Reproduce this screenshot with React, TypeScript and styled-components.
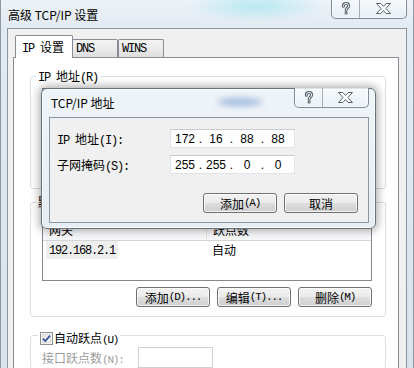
import React from "react";
import styled, { createGlobalStyle } from "styled-components";

const GlobalStyle = createGlobalStyle`
  html, body { margin: 0; padding: 0; }
  body {
    width: 414px; height: 368px; overflow: hidden;
    background: #dde6ee;
    font-family: "Noto Sans CJK SC", sans-serif;
  }
  *, *::before, *::after { box-sizing: border-box; }
`;

const Window = styled.div`
  position: relative;
  width: 414px;
  height: 368px;
  overflow: hidden;
  border-left: 1px solid #8d98a3;
  border-right: 1px solid #8d98a3;
  background:
    radial-gradient(ellipse 70px 16px at 255px 6px, rgba(150, 228, 242, 0.6), rgba(150, 228, 242, 0) 100%),
    linear-gradient(180deg, #edf2f7 0px, #e2eaf2 28px, #d9e3ec 368px);
  font-family: "Noto Sans CJK SC", sans-serif;
  font-size: 12px;
  color: #000;
`;

const TitleBar = styled.div`
  position: relative;
  display: flex;
  align-items: flex-start;
  height: 28px;
  padding: 0 6px 0 7px;
`;

const WindowTitle = styled.div`
  font-size: 12px;
  line-height: 30px;
  white-space: nowrap;
`;

const CaptionGroup = styled.div<{ $top: number; $w: number }>`
  display: flex;
  margin-left: auto;
  margin-top: ${(p) => p.$top}px;
  width: ${(p) => p.$w}px;
  height: 20px;
  border: 1px solid #7f8b98;
  border-top: none;
  border-radius: 0 0 5px 5px;
  background: linear-gradient(180deg, rgba(255, 255, 255, 0.55), rgba(232, 240, 247, 0.6));
  box-shadow: inset 0 0 0 1px rgba(255, 255, 255, 0.55);
  overflow: hidden;
  flex-shrink: 0;
`;

const CaptionBtn = styled.div<{ $w: number }>`
  width: ${(p) => p.$w}px;
  height: 100%;
  display: flex;
  align-items: center;
  justify-content: center;
  & + & {
    border-left: 1px solid #a3aeb9;
  }
`;

const HelpGlyph = () => (
  <svg width="10" height="13" viewBox="0 0 10 13">
    <path d="M2.3 4.2 C2.3 2.3 3.5 1.6 5 1.6 C6.7 1.6 7.7 2.6 7.7 3.9 C7.7 5.8 5.1 6 5.1 8.2" fill="none" stroke="#55606c" strokeWidth="3" strokeLinecap="round" />
    <circle cx="5.1" cy="11" r="1.6" fill="#55606c" />
    <path d="M2.3 4.2 C2.3 2.3 3.5 1.6 5 1.6 C6.7 1.6 7.7 2.6 7.7 3.9 C7.7 5.8 5.1 6 5.1 8.2" fill="none" stroke="#ffffff" strokeWidth="1" strokeLinecap="round" />
    <circle cx="5.1" cy="11" r="0.6" fill="#ffffff" />
  </svg>
);

const CloseGlyph = () => (
  <svg width="15" height="11" viewBox="0 0 15 11">
    <polygon
      points="0.5,0.5 4.8,0.5 7.5,3.4 10.2,0.5 14.5,0.5 9.9,5.5 14.5,10.5 10.2,10.5 7.5,7.6 4.8,10.5 0.5,10.5 5.1,5.5"
      fill="#ffffff"
      stroke="#56616d"
      strokeWidth="1"
      strokeLinejoin="round"
    />
  </svg>
);

const Mono = styled.span`
  font-family: "Liberation Mono", monospace;
  letter-spacing: -1.2px;
`;

const Client = styled.div`
  margin: 0 6px;
  height: 345px;
  border: 1px solid #8a95a0;
  border-bottom: none;
  background: #f0f0f0;
`;

const TabStrip = styled.div`
  position: relative;
  z-index: 1;
  display: flex;
  align-items: flex-end;
  height: 28px;
  padding-left: 7px;
`;

const Tab = styled.div<{ $active?: boolean; $w: number; $ml: number }>`
  position: relative;
  z-index: ${(p) => (p.$active ? 2 : 1)};
  width: ${(p) => p.$w}px;
  height: ${(p) => (p.$active ? 23 : 18)}px;
  margin-left: ${(p) => p.$ml}px;
  margin-bottom: ${(p) => (p.$active ? -1 : 0)}px;
  border: 1px solid #898c95;
  border-bottom: none;
  border-radius: 2px 2px 0 0;
  background: ${(p) =>
    p.$active ? "#ffffff" : "linear-gradient(180deg, #f3f3f3 0%, #ebebeb 50%, #dedede 100%)"};
  padding-left: ${(p) => (p.$active ? 6 : 3)}px;
  display: flex;
  align-items: center;
  white-space: pre;
  font-size: 12px;
`;

const TabPanel = styled.div`
  margin-left: 5px;
  width: 386px;
  height: 330px;
  border: 1px solid #898c95;
  background: #ffffff;
  padding-top: 0.1px;
`;

const GroupBox = styled.fieldset<{ $mt: number }>`
  margin: ${(p) => p.$mt}px 0 0 16px;
  width: 356px;
  min-width: 0;
  border: 1px solid #d5dfe5;
  border-radius: 3px;
  padding: 0;
`;

const Legend = styled.legend`
  margin-left: 5px;
  padding: 0 2px;
  height: 14px;
  line-height: 14px;
  font-size: 12px;
  white-space: pre;
`;

const CheckLegend = styled.legend`
  margin-left: 7px;
  padding: 6px 2px 0 2px;
  height: 21px;
  display: flex;
  align-items: center;
  gap: 1px;
  font-size: 12px;
  line-height: 15px;
  white-space: nowrap;
`;

const CheckBox = styled.span`
  width: 13px;
  height: 13px;
  border: 1px solid #8f8f8f;
  background: linear-gradient(135deg, #e4e4e4, #ffffff);
  box-shadow: inset 0 0 0 1px #f4f4f4, inset 0 0 0 2px #dcdcdc;
  display: flex;
  align-items: center;
  justify-content: center;
`;

const ListView = styled.div<{ $h: number; $mt: number; $mb: number }>`
  margin: ${(p) => p.$mt}px 13px ${(p) => p.$mb}px 11px;
  height: ${(p) => p.$h}px;
  border: 1px solid #828790;
  background: #ffffff;
  overflow: hidden;
`;

const HeaderRow = styled.div`
  display: flex;
  height: 22px;
  border-bottom: 1px solid #d5d5d5;
  background: linear-gradient(180deg, #ffffff 0%, #f6f7f9 100%);
`;

const HeaderCell = styled.div<{ $w?: number }>`
  ${(p) => (p.$w ? `width: ${p.$w}px; border-right: 1px solid #e5e5e5;` : "flex: 1;")}
  padding-left: 6px;
  display: flex;
  align-items: center;
  font-size: 12px;
  white-space: nowrap;
`;

const DataRow = styled.div`
  display: flex;
  height: 17px;
  align-items: center;
`;

const DataCell = styled.div<{ $w?: number; $pl: number }>`
  ${(p) => (p.$w ? `width: ${p.$w}px;` : "flex: 1;")}
  padding-left: ${(p) => p.$pl}px;
  display: flex;
  align-items: center;
  white-space: nowrap;
  font-size: 12px;
`;

const Selection = styled.span`
  padding: 1px 3px;
  background: #eeeeee;
  line-height: 14px;
`;

const ButtonRow = styled.div<{ $mt: number; $mr: number; $mb: number }>`
  display: flex;
  justify-content: flex-end;
  gap: 7px;
  margin: ${(p) => p.$mt}px ${(p) => p.$mr}px ${(p) => p.$mb}px 0;
`;

const Button = styled.div`
  width: 74px;
  height: 20px;
  border: 1px solid #707070;
  border-radius: 3px;
  background: linear-gradient(180deg, #f2f2f2 0%, #ebebeb 48%, #dddddd 52%, #cfcfcf 100%);
  box-shadow: inset 0 0 0 1px rgba(255, 255, 255, 0.75);
  display: flex;
  align-items: center;
  justify-content: center;
  font-size: 12px;
  white-space: nowrap;
`;

const SmallMono = styled.span`
  font-family: "Liberation Mono", monospace;
  font-size: 11px;
  letter-spacing: -1.2px;
`;

const MetricRow = styled.div`
  display: flex;
  align-items: center;
  margin: 1px 0 0 11px;
  height: 21px;
`;

const DisabledLabel = styled.span`
  width: 96px;
  color: #9d9d9d;
  font-size: 12px;
  white-space: nowrap;
`;

const DisabledInput = styled.div`
  width: 75px;
  height: 21px;
  border: 1px solid #cfd3d8;
  background: #ffffff;
`;

/* --- dialog --- */

const Dialog = styled.div`
  position: absolute;
  left: 40px;
  top: 88px;
  z-index: 5;
  width: 335px;
  height: 141px;
  border: 1px solid #66737f;
  border-radius: 6px;
  background: linear-gradient(180deg, #eff4f8 0%, #e6edf3 100%);
  box-shadow: 0 0 9px 2px rgba(0, 0, 0, 0.32), inset 0 0 0 1px rgba(255, 255, 255, 0.85);
  display: flex;
  flex-direction: column;
  padding: 0 6px 5px 7px;
`;

const DialogTitleBar = styled.div`
  position: relative;
  display: flex;
  align-items: flex-start;
  height: 28px;
  padding-left: 2px;
`;

const DialogTitle = styled.div`
  line-height: 28px;
  font-size: 12px;
  white-space: nowrap;
`;

const GhostBlur = styled.span<{ $l: number; $t: number; $w: number; $h: number }>`
  position: absolute;
  left: ${(p) => p.$l}px;
  top: ${(p) => p.$t}px;
  width: ${(p) => p.$w}px;
  height: ${(p) => p.$h}px;
  border-radius: 50%;
  background: rgba(70, 120, 195, 0.45);
  filter: blur(3px);
  pointer-events: none;
`;

const DialogClient = styled.div`
  flex: 1;
  border: 1px solid #8b97a2;
  background: #f0f0f0;
  padding: 11px 0 0 7px;
`;

const FieldGrid = styled.div`
  display: grid;
  grid-template-columns: 113px 125px;
  row-gap: 7px;
  align-items: center;
`;

const FieldLabel = styled.span`
  font-size: 12px;
  white-space: pre;
`;

const IpField = styled.div`
  height: 19px;
  border: 1px solid #e2e3ea;
  border-top-color: #c9cbd0;
  background: #ffffff;
  display: flex;
  align-items: center;
  padding-left: 1px;
  font-family: "Liberation Sans", sans-serif;
  font-size: 12px;
`;

const Octet = styled.span`
  width: 26px;
  text-align: center;
`;

const Dot = styled.span`
  width: 5px;
  text-align: center;
`;

const IpValue = ({ parts }: { parts: string[] }) => (
  <IpField>
    {parts.map((p, i) => (
      <React.Fragment key={i}>
        {i > 0 && <Dot>.</Dot>}
        <Octet>{p}</Octet>
      </React.Fragment>
    ))}
  </IpField>
);

const CheckMark = () => (
  <svg width="9" height="9" viewBox="0 0 9 9">
    <path d="M1 4.6 L3.4 7 L8 1.6" fill="none" stroke="#3b5a99" strokeWidth="1.9" strokeLinejoin="round" />
  </svg>
);

export default function App() {
  return (
    <>
      <GlobalStyle />
      <Window>
        <TitleBar>
          <WindowTitle>高级 TCP/IP 设置</WindowTitle>
          <CaptionGroup $top={-1} $w={76}>
            <CaptionBtn $w={27}>
              <HelpGlyph />
            </CaptionBtn>
            <CaptionBtn $w={47}>
              <CloseGlyph />
            </CaptionBtn>
          </CaptionGroup>
        </TitleBar>

        <Client>
          <TabStrip>
            <Tab $active $w={58} $ml={0}>
              <span>
                <Mono>IP </Mono>设置
              </span>
            </Tab>
            <Tab $w={46} $ml={-1}>
              <Mono>DNS</Mono>
            </Tab>
            <Tab $w={46} $ml={0}>
              <Mono>WINS</Mono>
            </Tab>
          </TabStrip>

          <TabPanel>
            <GroupBox $mt={11}>
              <Legend>
                <Mono>IP </Mono>地址<Mono>(R)</Mono>
              </Legend>
              <ListView $h={89} $mt={5} $mb={11}>
                <HeaderRow>
                  <HeaderCell $w={164} />
                  <HeaderCell />
                </HeaderRow>
              </ListView>
            </GroupBox>

            <GroupBox $mt={6}>
              <Legend>
                默认网关<Mono>(F):</Mono>
              </Legend>
              <ListView $h={63} $mt={9} $mb={0}>
                <HeaderRow>
                  <HeaderCell $w={164}>网关</HeaderCell>
                  <HeaderCell>跃点数</HeaderCell>
                </HeaderRow>
                <DataRow>
                  <DataCell $w={164} $pl={3}>
                    <Selection>
                      <Mono>192.168.2.1</Mono>
                    </Selection>
                  </DataCell>
                  <DataCell $pl={5}>自动</DataCell>
                </DataRow>
              </ListView>
              <ButtonRow $mt={6} $mr={13} $mb={9}>
                <Button>
                  添加<SmallMono>(D)...</SmallMono>
                </Button>
                <Button>
                  编辑<SmallMono>(T)...</SmallMono>
                </Button>
                <Button>
                  删除<SmallMono>(M)</SmallMono>
                </Button>
              </ButtonRow>
            </GroupBox>

            <GroupBox $mt={8}>
              <CheckLegend>
                <CheckBox>
                  <CheckMark />
                </CheckBox>
                <span>
                  自动跃点<SmallMono>(U)</SmallMono>
                </span>
              </CheckLegend>
              <MetricRow>
                <DisabledLabel>
                  接口跃点数<SmallMono>(N):</SmallMono>
                </DisabledLabel>
                <DisabledInput />
              </MetricRow>
            </GroupBox>
          </TabPanel>
        </Client>

        <Dialog>
          <DialogTitleBar>
            <DialogTitle>TCP/IP 地址</DialogTitle>
            <GhostBlur $l={168} $t={9} $w={46} $h={8} />
            <CaptionGroup $top={-1} $w={75}>
              <CaptionBtn $w={27}>
                <HelpGlyph />
              </CaptionBtn>
              <CaptionBtn $w={46}>
                <CloseGlyph />
              </CaptionBtn>
            </CaptionGroup>
          </DialogTitleBar>
          <DialogClient>
            <FieldGrid>
              <FieldLabel>
                <Mono>IP </Mono>地址<Mono>(I):</Mono>
              </FieldLabel>
              <IpValue parts={["172", "16", "88", "88"]} />
              <FieldLabel>
                子网掩码<Mono>(S):</Mono>
              </FieldLabel>
              <IpValue parts={["255", "255", "0", "0"]} />
            </FieldGrid>
            <ButtonRow $mt={19} $mr={10} $mb={0}>
              <Button>
                添加<SmallMono>(A)</SmallMono>
              </Button>
              <Button>取消</Button>
            </ButtonRow>
          </DialogClient>
        </Dialog>
      </Window>
    </>
  );
}
